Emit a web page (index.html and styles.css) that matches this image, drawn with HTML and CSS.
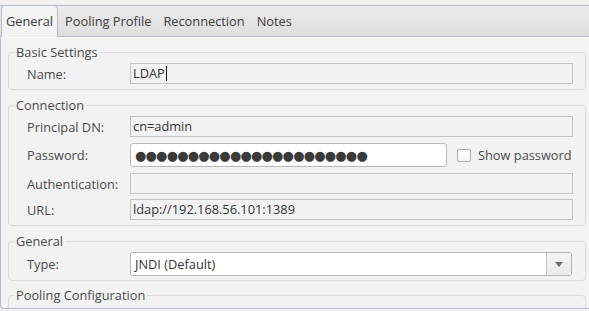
FILE: index.html
```html
<!DOCTYPE html>
<html>
<head>
<meta charset="utf-8">
<link rel="stylesheet" href="styles.css">
</head>
<body>
<div class="window">
  <div class="tabs">
    <div class="tab active">General</div>
    <div class="tab">Pooling Profile</div>
    <div class="tab">Reconnection</div>
    <div class="tab">Notes</div>
  </div>
  <div class="panel">
    <fieldset class="group g-basic">
      <legend>Basic Settings</legend>
      <div class="row">
        <label class="lbl">Name:</label>
        <div class="field ro"><span>LDAP</span><span class="caret"></span></div>
      </div>
    </fieldset>
    <fieldset class="group g-conn">
      <legend>Connection</legend>
      <div class="row">
        <label class="lbl">Principal DN:</label>
        <div class="field ro">cn=admin</div>
      </div>
      <div class="row r-pass">
        <label class="lbl">Password:</label>
        <div class="field edit pass"><span class="dots">●●●●●●●●●●●●●●●●●●●●●●</span></div>
        <div class="check"><span class="box"></span><span>Show password</span></div>
      </div>
      <div class="row">
        <label class="lbl">Authentication:</label>
        <div class="field ro"></div>
      </div>
      <div class="row">
        <label class="lbl">URL:</label>
        <div class="field ro">ldap://192.168.56.101:1389</div>
      </div>
    </fieldset>
    <fieldset class="group g-gen">
      <legend>General</legend>
      <div class="row">
        <label class="lbl">Type:</label>
        <div class="combo"><span class="combo-text">JNDI (Default)</span><span class="combo-btn"><svg width="8" height="5" viewBox="0 0 8 5"><path d="M0 0H8L4 5Z" fill="#6e6e6e"/></svg></span></div>
      </div>
    </fieldset>
    <fieldset class="group g-pool">
      <legend>Pooling Configuration</legend>
      <div class="pool-space"></div>
    </fieldset>
  </div>
</div>
</body>
</html>
```
FILE: styles.css
```css
html, body {
  margin: 0;
  padding: 0;
  background: #f2f1f0;
}
body {
  font-family: "Open Sans", "DejaVu Sans", sans-serif;
  font-size: 12.8px;
  color: #3c3c3c;
  width: 589px;
  height: 311px;
  overflow: hidden;
}
.window {
  padding-top: 5px;
}
.tabs {
  display: flex;
  height: 30px;
  border-top: 1px solid #b6bacb;
  border-bottom: 1px solid #b3b8cb;
  background: linear-gradient(#edebeb, #dedede);
  box-sizing: content-box;
  position: relative;
}
.tab {
  padding: 0 6px;
  line-height: 30px;
  color: #3c3c3c;
  margin-right: 0;
}
.tab.active {
  margin-left: 1px;
  margin-top: -1px;
  height: 32px;
  line-height: 31px;
  padding: 0 4px 0 4px;
  background: #f3f3f3;
  border: 1px solid #b6bacb;
  border-bottom: none;
  border-radius: 4px 4px 0 0;
  margin-right: 1px;
  box-sizing: border-box;
  position: relative;
  z-index: 1;
}
.panel {
  height: 270px;
  border-left: 1px solid #b6bacb;
  border-bottom: 1px solid #b6bacb;
  border-top: 1px solid #ffffff;
  border-bottom-left-radius: 4px;
  background: #f3f3f3;
  overflow: hidden;
  padding: 0 3px 0 7px;
}
.group {
  margin: 0;
  padding: 3px 12px 5px 18px;
  border: 1px solid #dadada;
  border-radius: 4px;
  background: #f2f2f2;
  min-width: 0;
}
.group legend {
  padding: 0 2px;
  margin-left: -13px;
  line-height: 16px;
  color: #4a4a4a;
}
.g-basic { margin-top: 6px; padding-bottom: 5px; }
.g-conn { margin-top: 7px; }
.g-gen { margin-top: 7px; padding-bottom: 4px; }
.g-pool { margin-top: 6px; }
.pool-space { height: 20px; }
.row {
  display: flex;
  align-items: center;
  margin-bottom: 5px;
}
.row:last-child { margin-bottom: 0; }
.g-conn .row { margin-bottom: 6px; }
.g-conn .row:nth-child(4) { margin-bottom: 5px; }
.g-conn .row:last-child { margin-bottom: 0; }
.lbl {
  width: 103px;
  flex: none;
  color: #4a4a4a;
}
.field {
  flex: 1;
  height: 21px;
  box-sizing: border-box;
  border: 1px solid #c4c3c0;
  background: #f2f2f2;
  padding: 0 2px;
  line-height: 19px;
  color: #333;
  display: flex;
  align-items: center;
}
.caret {
  display: inline-block;
  width: 1px;
  height: 15px;
  background: #111;
  margin-left: 1px;
}
.field.pass {
  flex: none;
  width: 317px;
  height: 24px;
  background: #ffffff;
  border: 1px solid #b9b8b5;
  border-radius: 3px;
  padding-left: 4px;
}
.dots {
  font-family: "DejaVu Sans", sans-serif;
  font-size: 13px;
  letter-spacing: -0.8px;
  color: #3a3a3a;
}
.check {
  display: flex;
  align-items: center;
  margin-left: 10px;
  color: #4a4a4a;
}
.box {
  width: 12px;
  height: 11px;
  border: 1px solid #a9a9a9;
  border-radius: 2px;
  background: linear-gradient(#ffffff, #f3f3f3);
  margin-right: 7px;
}
.combo {
  flex: 1;
  height: 24px;
  box-sizing: border-box;
  border: 1px solid #b4b3b0;
  border-radius: 3px;
  background: #fff;
  display: flex;
  align-items: center;
  margin-right: 1px;
}
.combo-text {
  flex: 1;
  padding-left: 4px;
  color: #333;
}
.combo-btn {
  width: 24px;
  height: 22px;
  border-left: 1px solid #c9c8c5;
  background: linear-gradient(#f4f4f4, #ebebeb);
  border-radius: 0 2px 2px 0;
  display: flex;
  align-items: center;
  justify-content: center;
}
```
